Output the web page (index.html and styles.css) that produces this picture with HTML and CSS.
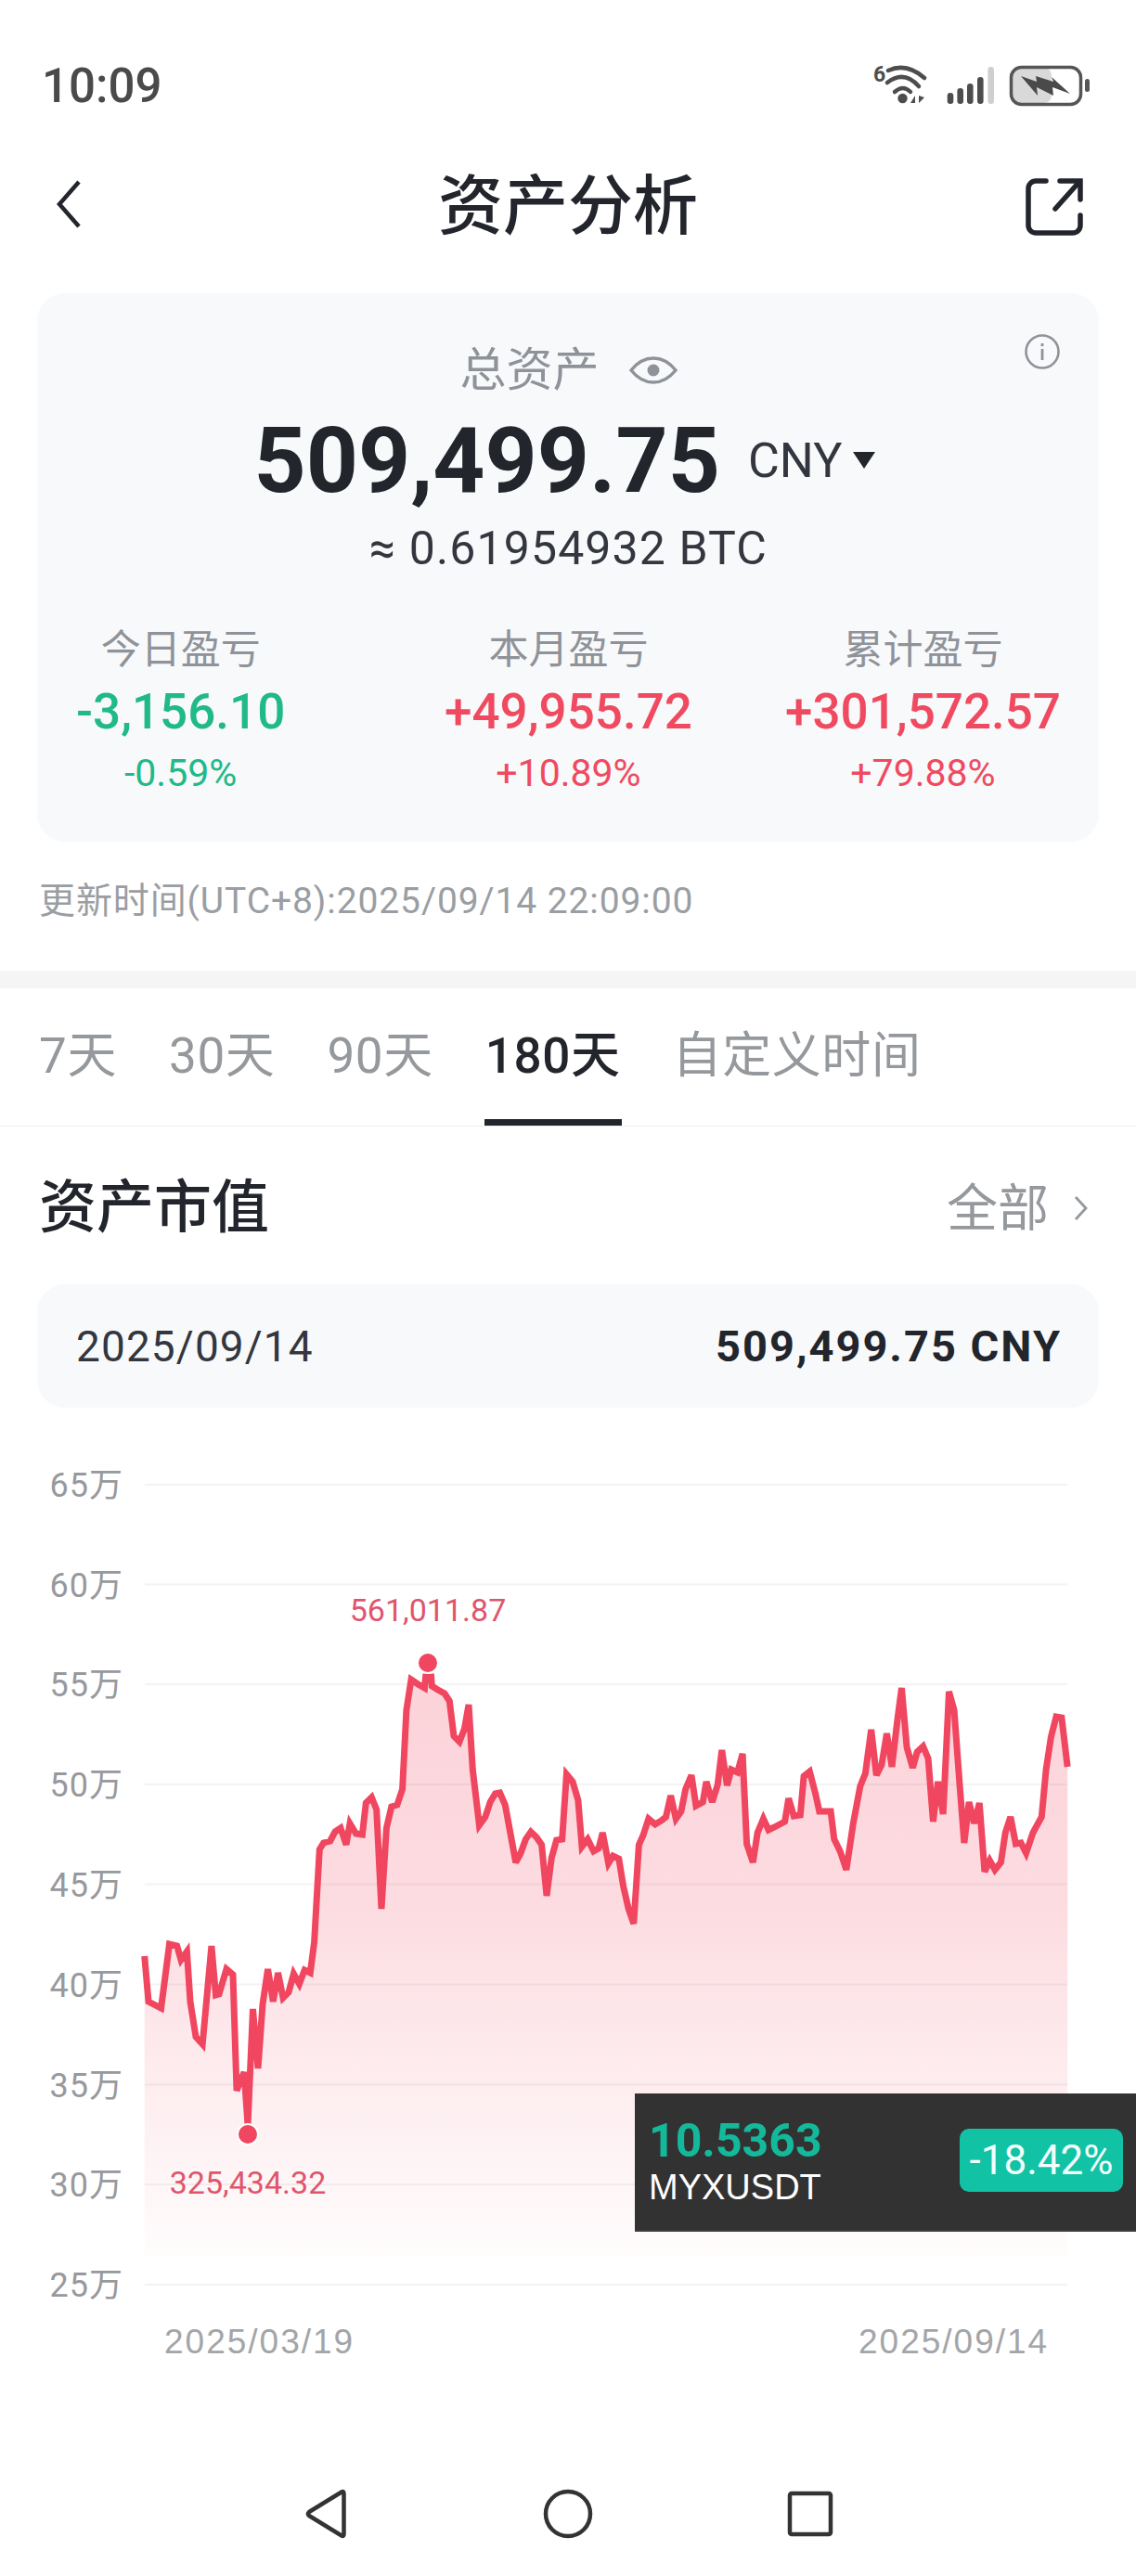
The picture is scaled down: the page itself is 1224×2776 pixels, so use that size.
FILE: index.html
```html
<!DOCTYPE html>
<html lang="zh-CN">
<head>
    <meta charset="UTF-8">
    <meta name="viewport" content="width=device-width, initial-scale=1.0">
    <title>资产分析</title>
    <link rel="stylesheet" href="styles.css">
</head>
<body>
    <div class="status-bar">
        <span class="status-time">10:09</span>
        <svg class="status-icons" viewBox="940 66 236 50" width="236" height="50">
            <text class="wifi-six" x="941" y="87">6</text>
            <g fill="none" stroke="#4d4d4d" stroke-width="4.5" stroke-linecap="round">
                <path d="M957 75Q977 66 996 83"/>
                <path d="M956 88Q974 74 990 92"/>
                <path d="M964 98Q973 90 981 98"/>
            </g>
            <circle cx="972.5" cy="105" r="5.2" fill="#4d4d4d"/>
            <path d="M981 110L986 102V110ZM990 102V110L996 104Z" fill="#4d4d4d"/>
            <g fill="#4d4d4d">
                <rect x="1020.7" y="99" width="6.6" height="12" rx="3.3"/>
                <rect x="1031.4" y="94" width="6.6" height="17" rx="3.3"/>
                <rect x="1042" y="89" width="6.6" height="22" rx="3.3"/>
                <rect x="1053" y="82" width="6.6" height="29" rx="3.3"/>
                <rect x="1064.4" y="71" width="6.6" height="40" rx="3.3" fill="#cfcfcf"/>
            </g>
            <rect x="1091" y="72" width="42" height="38" rx="8" fill="#d9d9d9"/>
            <rect x="1089.5" y="71.5" width="75" height="40" rx="11" fill="none" stroke="#555" stroke-width="3.5"/>
            <path d="M1100 81L1117 87L1116 81L1135 87L1133 82L1153 100L1134 93L1135 102L1117 93L1118 102Z" fill="#4a4a4a"/>
            <rect x="1169" y="84" width="5" height="14" rx="2.5" fill="#555"/>
        </svg>
    </div>

    <header class="top-nav">
        <svg class="back-icon" viewBox="0 0 40 60" width="40" height="60">
            <path d="M26 3L5 27L26 51" fill="none" stroke="#22252c" stroke-width="4.5"/>
        </svg>
        <h1 class="page-title">资产分析</h1>
        <svg class="share-icon" viewBox="0 0 70 70" width="70" height="70">
            <g fill="none" stroke="#22252c" stroke-width="5.5" stroke-linecap="round">
                <path d="M26 7H15a8 8 0 0 0-8 8V55a8 8 0 0 0 8 8H55a8 8 0 0 0 8-8V44"/>
                <path d="M36 37L61 9"/>
                <path d="M41 7H63V27"/>
            </g>
        </svg>
    </header>

    <section class="asset-card">
        <svg class="info-icon" viewBox="0 0 40 40" width="40" height="40">
            <circle cx="20" cy="20" r="17.5" fill="none" stroke="#8f9399" stroke-width="2.6"/>
            <rect x="18.6" y="17" width="2.8" height="12" fill="#8f9399"/>
            <rect x="18.6" y="11" width="2.8" height="3.2" fill="#8f9399"/>
        </svg>
        <div class="total-label">
            <span>总资产</span>
            <svg viewBox="0 0 52 32" width="52" height="32">
                <path d="M2 16C10 6 18 3 26 3S42 6 50 16C42 26 34 29 26 29S10 26 2 16Z" fill="none" stroke="#8f9399" stroke-width="3.4"/>
                <circle cx="26" cy="16" r="6.5" fill="#8f9399"/>
            </svg>
        </div>
        <div class="total-value">
            <span class="total-amount">509,499.75</span>
            <span class="total-unit">CNY</span>
            <span class="total-caret"></span>
        </div>
        <div class="total-btc">≈ 0.61954932 BTC</div>
        <div class="stat-grid">
            <div class="stat stat-left">
                <div class="stat-label">今日盈亏</div>
                <div class="stat-value down">-3,156.10</div>
                <div class="stat-pct down">-0.59%</div>
            </div>
            <div class="stat">
                <div class="stat-label">本月盈亏</div>
                <div class="stat-value up">+49,955.72</div>
                <div class="stat-pct up">+10.89%</div>
            </div>
            <div class="stat stat-right">
                <div class="stat-label">累计盈亏</div>
                <div class="stat-value up">+301,572.57</div>
                <div class="stat-pct up">+79.88%</div>
            </div>
        </div>
    </section>

    <p class="update-time">更新时间(UTC+8):2025/09/14 22:09:00</p>

    <div class="band"></div>

    <nav class="tabs">
        <a class="tab">7天</a>
        <a class="tab">30天</a>
        <a class="tab">90天</a>
        <a class="tab active">180天</a>
        <a class="tab">自定义时间</a>
    </nav>

    <div class="section-head">
        <h2>资产市值</h2>
        <div class="section-more">
            <span>全部</span>
            <svg viewBox="0 0 18 30" width="18" height="30">
                <path d="M3 3L14 15L3 27" fill="none" stroke="#95989c" stroke-width="2.8"/>
            </svg>
        </div>
    </div>

    <div class="value-row">
        <span class="value-date">2025/09/14</span>
        <span class="value-amount">509,499.75 CNY</span>
    </div>

    <div class="chart-wrap">
        <!-- viewBox uses the y of the whole page so the points are easy to check -->
        <svg class="chart" viewBox="0 1517 1224 1043" width="1224" height="1043">
            <defs>
                <linearGradient id="area-fade" gradientUnits="userSpaceOnUse" x1="0" y1="1800" x2="0" y2="2432">
                    <stop offset="0" stop-color="#f0465f" stop-opacity="0.24"/>
                    <stop offset="0.4" stop-color="#f0465f" stop-opacity="0.19"/>
                    <stop offset="0.8" stop-color="#f0465f" stop-opacity="0.07"/>
                    <stop offset="1" stop-color="#f0465f" stop-opacity="0.015"/>
                </linearGradient>
            </defs>
            <path fill="url(#area-fade)" d="M155.7 2108L160 2157 173.6 2164 182.5 2095 190.7 2097 195 2112 201.4 2103 205 2157 211 2195 218.2 2203 227.9 2097 232.5 2150 236 2149 244 2122 251 2128 255 2253 263 2233 267 2290 272.5 2165 278 2229 283 2160 288.6 2122 294.3 2157 299.6 2126 305 2153 311 2147 316.4 2127 322.5 2138 328.2 2123 334.3 2126 338.6 2093 342 2033 344.3 1993 348.6 1986 355.7 1984 361 1974 367 1970 373 1988 377 1965 383.6 1976 390.4 1977 394.3 1943 400.4 1937 405.7 1950 411 2057 416.4 1970 421.8 1947 427.9 1945 433.6 1928 437.9 1843 443 1810 450.4 1815 457.5 1819 458.6 1807 464.6 1807 465.4 1817 471.8 1821 479 1825 484.3 1833 489 1871 495 1877 500.4 1863 505 1837 509.3 1907 516.4 1967 522.9 1958 528.2 1942 533.6 1933 538.6 1932 544.3 1945 555.7 2007 561 1997 566.4 1982 572 1974 578.2 1980 583.6 1988 589 2043 594.3 2002 599.6 1983 605.7 1982 610.4 1912 617 1920 622.9 1940 627 1990 633.2 1982 639.6 1995 645 1992 649.3 1975 655.6 2008 660.5 2000 666.8 2003 671.7 2033 677.2 2057 682.8 2073 688.4 1988 692.9 1978 698.8 1960 705.9 1966 712.6 1962 717.5 1958 722.7 1935 728.3 1960 733.9 1952 738.7 1928 745 1913 749.9 1946 757.3 1942 761 1920 767.4 1942 773.3 1923 777.8 1886 783.4 1924 787.9 1907 794.6 1910 800.1 1890 804.6 1987 811.3 2007 816.2 1975 822.5 1960 828.1 1972 834.4 1969 840 1966 845.6 1963 849.7 1938 855.3 1957 862.3 1956 866.1 1914 872.4 1909 878.4 1932 882.8 1952 895.1 1952 898.8 1982 905.2 1995 911.9 2015 919.3 1965 926.8 1925 932.4 1911 938.7 1864 944.3 1913 949.9 1902 955.5 1868 961 1904 967 1853 971.5 1819 977.1 1883 983.4 1905 988.2 1888 994.6 1882 1000.1 1895 1005.4 1963 1010.6 1920 1016.2 1955 1022.5 1823 1028.1 1843 1034 1923 1038.9 1986 1044.1 1942 1049.7 1965 1055.3 1943 1060.9 2017 1066.4 2005 1072 2015 1078.4 2007 1083.2 1975 1088.8 1958 1094.4 1987 1100 1986 1105.6 1997 1113 1975 1122.3 1958 1127.1 1907 1132.4 1872 1138 1850 1143.9 1851 1150.2 1904V2432H155.7Z"/>

            <g class="grid-lines">
                <line x1="156" x2="1150" y1="1600" y2="1600"/>
                <line x1="156" x2="1150" y1="1707.5" y2="1707.5"/>
                <line x1="156" x2="1150" y1="1815" y2="1815"/>
                <line x1="156" x2="1150" y1="1923" y2="1923"/>
                <line x1="156" x2="1150" y1="2030.5" y2="2030.5"/>
                <line x1="156" x2="1150" y1="2138.5" y2="2138.5"/>
                <line x1="156" x2="1150" y1="2246.5" y2="2246.5"/>
                <line x1="156" x2="1150" y1="2354" y2="2354"/>
                <line x1="156" x2="1150" y1="2462" y2="2462"/>
            </g>

            <polyline class="chart-line" points="155.7,2108 160,2157 173.6,2164 182.5,2095 190.7,2097 195,2112 201.4,2103 205,2157 211,2195 218.2,2203 227.9,2097 232.5,2150 236,2149 244,2122 251,2128 255,2253 263,2233 267,2290 272.5,2165 278,2229 283,2160 288.6,2122 294.3,2157 299.6,2126 305,2153 311,2147 316.4,2127 322.5,2138 328.2,2123 334.3,2126 338.6,2093 342,2033 344.3,1993 348.6,1986 355.7,1984 361,1974 367,1970 373,1988 377,1965 383.6,1976 390.4,1977 394.3,1943 400.4,1937 405.7,1950 411,2057 416.4,1970 421.8,1947 427.9,1945 433.6,1928 437.9,1843 443,1810 450.4,1815 457.5,1819 458.6,1807 464.6,1807 465.4,1817 471.8,1821 479,1825 484.3,1833 489,1871 495,1877 500.4,1863 505,1837 509.3,1907 516.4,1967 522.9,1958 528.2,1942 533.6,1933 538.6,1932 544.3,1945 555.7,2007 561,1997 566.4,1982 572,1974 578.2,1980 583.6,1988 589,2043 594.3,2002 599.6,1983 605.7,1982 610.4,1912 617,1920 622.9,1940 627,1990 633.2,1982 639.6,1995 645,1992 649.3,1975 655.6,2008 660.5,2000 666.8,2003 671.7,2033 677.2,2057 682.8,2073 688.4,1988 692.9,1978 698.8,1960 705.9,1966 712.6,1962 717.5,1958 722.7,1935 728.3,1960 733.9,1952 738.7,1928 745,1913 749.9,1946 757.3,1942 761,1920 767.4,1942 773.3,1923 777.8,1886 783.4,1924 787.9,1907 794.6,1910 800.1,1890 804.6,1987 811.3,2007 816.2,1975 822.5,1960 828.1,1972 834.4,1969 840,1966 845.6,1963 849.7,1938 855.3,1957 862.3,1956 866.1,1914 872.4,1909 878.4,1932 882.8,1952 895.1,1952 898.8,1982 905.2,1995 911.9,2015 919.3,1965 926.8,1925 932.4,1911 938.7,1864 944.3,1913 949.9,1902 955.5,1868 961,1904 967,1853 971.5,1819 977.1,1883 983.4,1905 988.2,1888 994.6,1882 1000.1,1895 1005.4,1963 1010.6,1920 1016.2,1955 1022.5,1823 1028.1,1843 1034,1923 1038.9,1986 1044.1,1942 1049.7,1965 1055.3,1943 1060.9,2017 1066.4,2005 1072,2015 1078.4,2007 1083.2,1975 1088.8,1958 1094.4,1987 1100,1986 1105.6,1997 1113,1975 1122.3,1958 1127.1,1907 1132.4,1872 1138,1850 1143.9,1851 1150.2,1904"/>

            <circle class="chart-dot" cx="461" cy="1792" r="11"/>
            <circle class="chart-dot" cx="267" cy="2300" r="11"/>

            <text class="peak-label" x="461" y="1747">561,011.87</text>
            <text class="peak-label" x="267" y="2364">325,434.32</text>

            <g class="axis-y">
                <text x="133" y="1613">65万</text>
                <text x="133" y="1721">60万</text>
                <text x="133" y="1828">55万</text>
                <text x="133" y="1936">50万</text>
                <text x="133" y="2044">45万</text>
                <text x="133" y="2152">40万</text>
                <text x="133" y="2260">35万</text>
                <text x="133" y="2367">30万</text>
                <text x="133" y="2475">25万</text>
            </g>
            <g class="axis-x">
                <text x="177" y="2536">2025/03/19</text>
                <text x="925" y="2536">2025/09/14</text>
            </g>
        </svg>

        <div class="ticker">
            <div class="ticker-text">
                <div class="ticker-price">10.5363</div>
                <div class="ticker-name">MYXUSDT</div>
            </div>
            <div class="ticker-badge">-18.42%</div>
        </div>
    </div>

    <div class="system-nav">
        <svg viewBox="0 0 60 60" width="60" height="60">
            <path d="M47 6.500Q49.500 5 49.500 8V52Q49.500 55 47 53.500L12 32Q10 30 12 28Z" fill="none" stroke="#333" stroke-width="4.500" stroke-linejoin="round"/>
        </svg>
        <svg viewBox="0 0 60 60" width="60" height="60">
            <circle cx="30" cy="30" r="24" fill="none" stroke="#333" stroke-width="4.500"/>
        </svg>
        <svg viewBox="0 0 60 60" width="60" height="60">
            <rect x="8" y="8" width="44" height="44" rx="2" fill="none" stroke="#333" stroke-width="4.500"/>
        </svg>
    </div>
</body>
</html>
```

FILE: styles.css
```css
* {
    margin: 0;
    padding: 0;
    box-sizing: border-box;
}

body {
    width: 1224px;
    height: 2776px;
    overflow: hidden;
    background: #fff;
    color: #22252c;
    font-family: Roboto, "Noto Sans CJK SC", sans-serif;
}

svg {
    display: block;
}

/* status bar */
.status-bar {
    height: 124px;
    padding: 62px 48px 0 45px;
    display: flex;
    justify-content: space-between;
    align-items: center;
}

.status-time {
    font-size: 51px;
    font-weight: 500;
    line-height: 64px;
    color: #4a4a4a;
}

.status-icons {
    margin-top: -2px;
}

.wifi-six {
    font-size: 23px;
    font-weight: 700;
    fill: #4d4d4d;
}

/* title row */
.top-nav {
    height: 192px;
    padding: 0 53px;
    display: grid;
    grid-template-columns: 1fr auto 1fr;
    align-items: center;
}

.back-icon {
    justify-self: start;
    margin: 6px 0 0 6px;
}

.share-icon {
    justify-self: end;
    margin-top: 6px;
}

.page-title {
    margin-top: 5px;
    font-size: 70px;
    font-weight: 500;
    line-height: 90px;
}

/* total assets card */
.asset-card {
    position: relative;
    height: 591px;
    margin: 0 40px;
    padding: 53px 41px 0 42px;
    background: #f8f9fb;
    border-radius: 30px;
}

.info-icon {
    position: absolute;
    top: 43px;
    right: 41px;
}

.total-label {
    display: flex;
    justify-content: center;
    align-items: center;
    gap: 32px;
    font-size: 50px;
    line-height: 60px;
    color: #8f9399;
}

.total-value {
    height: 120px;
    margin-top: 7px;
    padding-right: 8px;
    display: flex;
    justify-content: center;
    align-items: center;
}

.total-amount {
    font-size: 98px;
    font-weight: 700;
}

.total-unit {
    margin-left: 30px;
    font-size: 52px;
    color: #33363e;
}

.total-caret {
    margin-left: 12px;
    border-left: 12px solid transparent;
    border-right: 12px solid transparent;
    border-top: 18px solid #22252c;
}

.total-btc {
    margin-top: 5px;
    font-size: 50px;
    line-height: 60px;
    letter-spacing: 1.1px;
    text-align: center;
    color: #33363e;
}

.stat-grid {
    margin-top: 54px;
    display: grid;
    grid-template-columns: 1fr auto 1fr;
}

.stat {
    text-align: center;
}

.stat-left {
    justify-self: start;
}

.stat-right {
    justify-self: end;
}

.stat-label {
    font-size: 43px;
    line-height: 50px;
    color: #8f9399;
}

.stat-value {
    margin-top: 10px;
    font-size: 53px;
    font-weight: 500;
    line-height: 64px;
}

.stat-pct {
    margin-top: 9px;
    font-size: 41px;
    line-height: 50px;
}

.up {
    color: #ef4a60;
}

.down {
    color: #20b987;
}

.update-time {
    margin: 39px 0 50px 42px;
    font-size: 39px;
    line-height: 50px;
    letter-spacing: 0.9px;
    color: #9a9ea3;
}

.band {
    height: 19px;
    background: #f5f5f6;
}

/* range tabs */
.tabs {
    height: 149px;
    padding-left: 42px;
    display: flex;
    gap: 56px;
    border-bottom: 1px solid #f0f0f1;
}

.tab {
    position: relative;
    padding-top: 43px;
    font-size: 53px;
    line-height: 60px;
    letter-spacing: 0.6px;
    color: #95989c;
}

.tab.active {
    color: #22252c;
    font-weight: 500;
}

.tab.active::after {
    content: "";
    position: absolute;
    left: -1px;
    right: -1px;
    bottom: 0;
    height: 7px;
    background: #22252c;
}

/* market value */
.section-head {
    padding: 48px 50px 0 42px;
    display: flex;
    justify-content: space-between;
    align-items: center;
    line-height: 80px;
}

.section-head h2 {
    font-size: 62px;
    font-weight: 500;
}

.section-more {
    display: flex;
    align-items: center;
    gap: 26px;
    font-size: 55px;
    color: #95989c;
}

.value-row {
    height: 133px;
    margin: 42px 40px 0;
    padding: 0 40px 0 42px;
    display: flex;
    justify-content: space-between;
    align-items: center;
    background: #f8f9fb;
    border-radius: 30px;
}

.value-date {
    font-size: 46px;
    letter-spacing: 1.1px;
    color: #33363e;
}

.value-amount {
    font-size: 47px;
    font-weight: 700;
    letter-spacing: 2px;
}

/* chart */
.chart-wrap {
    position: relative;
}

.grid-lines line {
    stroke: #80808018;
    stroke-width: 2;
}

.chart-line {
    fill: none;
    stroke: #f0465f;
    stroke-width: 7;
    stroke-linejoin: miter;
    stroke-miterlimit: 3;
}

.chart-dot {
    fill: #f0465f;
    stroke: #fff;
    stroke-width: 2;
}

.peak-label {
    font-size: 34px;
    fill: #e0556c;
    text-anchor: middle;
}

.axis-y text {
    font-size: 36px;
    letter-spacing: 1px;
    fill: #97999d;
    text-anchor: end;
}

.axis-x text {
    font-family: "Liberation Sans", sans-serif;
    font-size: 37px;
    letter-spacing: 2px;
    fill: #a3a5a8;
}

/* floating ticker over the chart */
.ticker {
    position: absolute;
    top: 739px;
    right: 0;
    width: 540px;
    height: 149px;
    padding: 0 14px 0 15px;
    display: flex;
    justify-content: space-between;
    align-items: center;
    background: #333232;
    border-bottom: 2px solid #3d3c3c;
}

.ticker-price {
    font-size: 50px;
    font-weight: 700;
    line-height: 54px;
    color: #14b89b;
}

.ticker-name {
    font-family: "Liberation Sans", sans-serif;
    font-size: 38px;
    line-height: 46px;
    color: #fff;
}

.ticker-badge {
    width: 176px;
    height: 68px;
    margin-top: -4px;
    font-size: 44px;
    line-height: 68px;
    text-align: center;
    color: #f4fffc;
    background: #12c2a4;
    border-radius: 10px;
}

/* android navigation */
.system-nav {
    padding-top: 119px;
    display: flex;
    justify-content: center;
    gap: 201px;
}
```
